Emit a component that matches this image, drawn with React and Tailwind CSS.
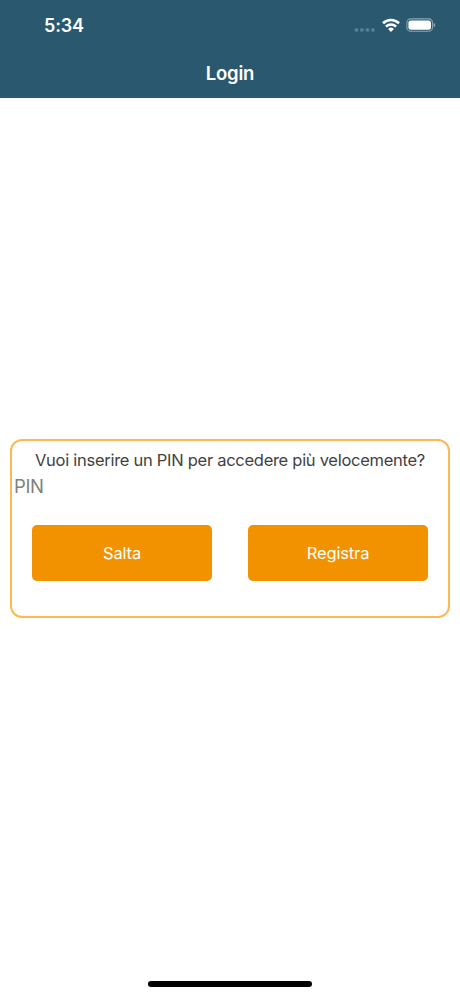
import { useState } from 'react'

function StatusBar() {
  return (
    <div className="flex h-[50px] items-center justify-between pl-[44px] pr-[24px] text-white">
      <span className="pt-[2px] text-[18px] font-semibold leading-[22px] tracking-[-0.15px]">5:34</span>
      <div className="flex items-center">
        <svg width="22" height="14" viewBox="0 0 22 14" className="mr-[6px]" fill="#587f93">
          <circle cx="2.4" cy="11.9" r="1.9" />
          <circle cx="7.9" cy="11.9" r="1.9" />
          <circle cx="13.4" cy="11.9" r="1.9" />
          <circle cx="18.9" cy="11.9" r="1.9" />
        </svg>
        <svg width="18" height="14" viewBox="0 0 18 14" className="mr-[6px]" fill="none" stroke="#fff">
          <path d="M1 5.2a11.6 11.6 0 0 1 16 0" strokeWidth="2.7" />
          <path d="M3.9 8.6a7.4 7.4 0 0 1 10.2 0" strokeWidth="2.6" />
          <path d="M9 13.9L6.1 11a4.2 4.2 0 0 1 5.8 0z" fill="#fff" stroke="none" />
        </svg>
        <svg width="30" height="14" viewBox="0 0 30 14">
          <rect x="0.9" y="0.9" width="25.6" height="12.4" rx="3.8" fill="none" stroke="#8ba6b4" strokeWidth="1.1" />
          <rect x="2.4" y="2.4" width="22.6" height="9.4" rx="2.4" fill="#fff" />
          <path d="M27.7 5v4.4c1-.4 1.5-1.2 1.5-2.2s-.5-1.8-1.5-2.2z" fill="#8ba6b4" />
        </svg>
      </div>
    </div>
  )
}

function App() {
  const [pin, setPin] = useState('')

  return (
    <div className="flex h-[996px] w-[460px] flex-col bg-white font-['Inter',sans-serif]">
      <header className="h-[98px] bg-[#2a596f]">
        <StatusBar />
        <h1 className="text-center text-[18.5px] font-semibold leading-[47px] tracking-[-0.2px] text-white">
          Login
        </h1>
      </header>

      <main className="flex-1 px-[10px] pt-[341px]">
        <form
          onSubmit={(e) => e.preventDefault()}
          className="h-[178.5px] rounded-[12px] border-2 border-[#fbb950]"
        >
          <p className="mt-[8px] whitespace-nowrap text-center text-[16.5px] leading-[22px] tracking-[-0.28px] text-[#424242]">
            Vuoi inserire un PIN per accedere più velocemente?
          </p>
          <input
            type="text"
            value={pin}
            onChange={(e) => setPin(e.target.value)}
            placeholder="PIN"
            className="block h-[30px] w-full pl-[2px] text-[18.5px] tracking-[-0.4px] text-[#424242] outline-none placeholder:text-[#808080]"
          />
          <div className="mt-[24px] flex justify-between px-[20px]">
            <button type="button" className="h-[56px] w-[180px] rounded-[5px] bg-[#f39200] text-[16.5px] tracking-[-0.15px] text-white">
              Salta
            </button>
            <button type="submit" className="h-[56px] w-[180px] rounded-[5px] bg-[#f39200] text-[16.5px] tracking-[-0.15px] text-white">
              Registra
            </button>
          </div>
        </form>
      </main>

      <footer className="flex justify-center pb-[9px]">
        <div className="h-[6px] w-[164px] rounded-full bg-black" />
      </footer>
    </div>
  )
}

export default App
